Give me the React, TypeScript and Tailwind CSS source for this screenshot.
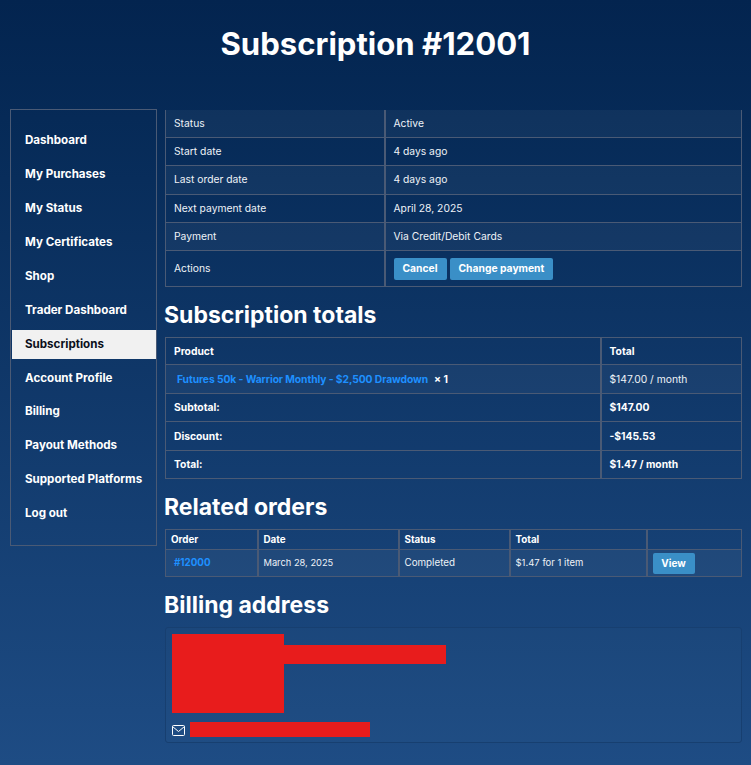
import React from "react";

const font = { fontFamily: '"Inter", "Open Sans", "Liberation Sans", sans-serif' };
const nav = ["Dashboard","My Purchases","My Status","My Certificates","Shop","Trader Dashboard","Subscriptions","Account Profile","Billing","Payout Methods","Supported Platforms","Log out"];
const b = "border border-[#4a5a75]";
const td = `${b} px-2 py-0 text-[10.3px] text-[#eef2f7] font-normal text-left`;
const tdb = `${b} px-2 py-0 text-[10.3px] text-white font-bold text-left`;
const Btn = ({ children }: { children: React.ReactNode }) => (
  <span className="inline-flex items-center justify-center h-[22px] px-[9px] rounded-[2px] bg-[#3a8fc7] text-white text-[10.3px] font-bold">{children}</span>
);
const H2 = ({ children, cls }: { children: React.ReactNode; cls: string }) => (
  <h2 className={`-ml-px text-[23px] leading-[28px] font-bold text-white ${cls}`}>{children}</h2>
);
const details: [string, React.ReactNode][] = [
  ["Status", "Active"], ["Start date", "4 days ago"], ["Last order date", "4 days ago"],
  ["Next payment date", "April 28, 2025"], ["Payment", "Via Credit/Debit Cards"],
];
const stripe = "bg-[#ffffff0b]";

export default function App() {
  return (
    <div style={font} className="w-[751px] h-[765px] overflow-hidden bg-gradient-to-b from-[#03244f] to-[#1e4c84] text-white">
      <header className="h-[109px] pt-[24px] text-center">
        <h1 className="text-[31.1px] leading-[40px] font-bold">Subscription #12001</h1>
      </header>
      <div className="flex items-start pl-[10px] gap-[8px]">
        <nav className={`w-[147px] h-[437px] ${b} pt-[16.5px] pl-px flex flex-col gap-[4.9px]`}>
          {nav.map((n) => (
            <div key={n} className={`h-[29px] pl-[13px] flex items-center text-[11.6px] font-bold whitespace-nowrap ${n === "Subscriptions" ? "bg-[#f1f1f1] text-[#0b0f1a]" : "text-white"}`}>{n}</div>
          ))}
        </nav>
        <main className="w-[577px] pt-px">
          <table className="w-full table-fixed border-collapse">
            <colgroup><col className="w-[219px]" /><col /></colgroup>
            <tbody>
              {details.map(([k, v], i) => (
                <tr key={k} className={`${i === 0 ? "h-[27.4px]" : "h-[28.4px]"} ${i % 2 === 0 ? stripe : ""}`}>
                  <td className={`${td} ${i === 0 ? "border-t-0" : ""}`}>{k}</td>
                  <td className={`${td} border-l-2 ${i === 0 ? "border-t-0" : ""}`}>{v}</td>
                </tr>
              ))}
              <tr className="h-[36px]">
                <td className={td}>Actions</td>
                <td className={`${td} border-l-2`}><div className="flex gap-[3px]"><Btn>Cancel</Btn><Btn>Change payment</Btn></div></td>
              </tr>
            </tbody>
          </table>

          <H2 cls="mt-[14px] mb-[8px]">Subscription totals</H2>
          <table className="w-full table-fixed border-collapse">
            <colgroup><col className="w-[435px]" /><col /></colgroup>
            <tbody>
              <tr className="h-[27px]"><td className={tdb}>Product</td><td className={`${tdb} border-l-2`}>Total</td></tr>
              <tr className={`h-[29px] ${stripe}`}>
                <td className={`${td} pl-[11px]`}><span className="text-[#1e90ff] font-bold tracking-[-0.08px]">Futures 50k - Warrior Monthly - $2,500 Drawdown</span><span className="font-bold text-white ml-[6px]">× 1</span></td>
                <td className={`${td} border-l-2`}>$147.00 / month</td>
              </tr>
              <tr className="h-[28px]"><td className={tdb}>Subtotal:</td><td className={`${tdb} border-l-2`}>$147.00</td></tr>
              <tr className="h-[29px]"><td className={tdb}>Discount:</td><td className={`${tdb} border-l-2`}>-$145.53</td></tr>
              <tr className="h-[28px]"><td className={tdb}>Total:</td><td className={`${tdb} border-l-2`}>$1.47 / month</td></tr>
            </tbody>
          </table>

          <H2 cls="mt-[14px] mb-[8px]">Related orders</H2>
          <table className="w-full table-fixed border-collapse">
            <colgroup><col className="w-[92px]" /><col className="w-[141px]" /><col className="w-[111px]" /><col className="w-[137px]" /><col /></colgroup>
            <tbody>
              <tr className="h-[20px]">
                {["Order","Date","Status","Total",""].map((h, i) => <td key={i} className={`${tdb} !px-[5px] !text-[9.8px] ${i > 0 ? "border-l-2" : ""}`}>{h}</td>)}
              </tr>
              <tr className={`h-[27px] ${stripe}`}>
                <td className={`${td} !text-[9.8px] pl-[8px] font-bold`}><span className="text-[#1e90ff] font-bold">#12000</span></td>
                <td className={`${td} border-l-2 !text-[9.3px] !px-[5px]`}>March 28, 2025</td>
                <td className={`${td} border-l-2 !text-[9.8px] !px-[5px]`}>Completed</td>
                <td className={`${td} border-l-2 !text-[9.5px] !px-[5px]`}>$1.47 for 1 item</td>
                <td className={`${td} border-l-2 !px-[5px]`}><span className="inline-flex items-center justify-center h-[21px] w-[42px] rounded-[2px] bg-[#3a8fc7] text-white text-[10px] font-bold">View</span></td>
              </tr>
            </tbody>
          </table>

          <H2 cls="mt-[14px] mb-[8px]">Billing address</H2>
          <div className="relative h-[116px] rounded-[3px] border border-[#173f70] bg-[#ffffff03]">
            <div className="absolute left-[5.7px] top-[6px] w-[112px] h-[79px] bg-[#e81c1c]" />
            <div className="absolute left-[117.7px] top-[17px] w-[162px] h-[19px] bg-[#e81c1c]" />
            <svg className="absolute left-[6px] top-[97px]" width="13" height="11" viewBox="0 0 13 11" fill="none" stroke="#fff" strokeWidth="1">
              <rect x="0.5" y="0.5" width="12" height="10" rx="1" /><path d="M0.5 1.5 L6.5 6.5 L12.5 1.5" />
            </svg>
            <div className="absolute left-[23.5px] top-[94px] w-[180px] h-[15px] bg-[#e81c1c]" />
          </div>
        </main>
      </div>
    </div>
  );
}
